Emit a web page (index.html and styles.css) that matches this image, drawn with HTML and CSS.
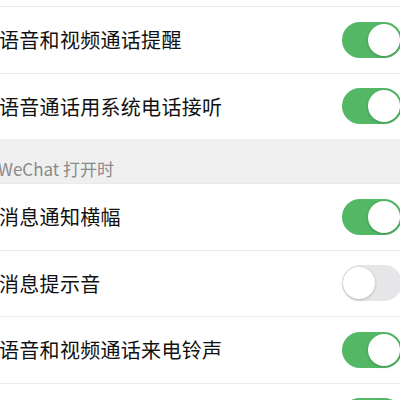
FILE: index.html
```html
<!DOCTYPE html>
<html lang="zh">
<head>
<meta charset="utf-8">
<link rel="stylesheet" href="styles.css">
</head>
<body>
<div class="page">
  <div class="top-gap"></div>
  <div class="group">
    <div class="row"><span class="label">语音和视频通话提醒</span><span class="switch on"><span class="knob"></span></span></div>
    <div class="row"><span class="label">语音通话用系统电话接听</span><span class="switch on"><span class="knob"></span></span></div>
  </div>
  <div class="section">WeChat 打开时</div>
  <div class="group">
    <div class="row"><span class="label">消息通知横幅</span><span class="switch on"><span class="knob"></span></span></div>
    <div class="row"><span class="label">消息提示音</span><span class="switch off"><span class="knob"></span></span></div>
    <div class="row"><span class="label">语音和视频通话来电铃声</span><span class="switch on"><span class="knob"></span></span></div>
    <div class="row"><span class="label">语音和视频通话震动</span><span class="switch on"><span class="knob"></span></span></div>
  </div>
</div>
</body>
</html>
```
FILE: styles.css
```css
html, body {
  margin: 0;
  padding: 0;
  background: #ffffff;
  overflow: hidden;
}
.page {
  width: 400px;
  height: 400px;
  overflow: hidden;
  font-family: "Noto Sans CJK SC", "Noto Sans", sans-serif;
}
.top-gap {
  height: 6px;
  background: #ffffff;
}
.group {
  background: #ffffff;
}
.row {
  height: 65.5px;
  border-top: 1px solid #e9e9e9;
  display: flex;
  align-items: center;
  justify-content: space-between;
  padding-left: 0;
}
.label {
  font-size: 20px;
  color: #111111;
  margin-left: -1px;
  letter-spacing: 0.3px;
}
.section {
  height: 44px;
  background: #efeff0;
  color: #8a8a8a;
  font-size: 17px;
  display: flex;
  align-items: center;
  padding-top: 14px;
  box-sizing: border-box;
  margin-left: -2px;
}
.switch {
  width: 60px;
  height: 36px;
  border-radius: 18px;
  margin-right: -2px;
  display: flex;
  align-items: center;
  padding: 0 2px;
  box-sizing: border-box;
  flex-shrink: 0;
}
.switch.on {
  background: #52b865;
  justify-content: flex-end;
}
.switch.off {
  background: #e6e6e8;
  justify-content: flex-start;
  padding-left: 1px;
}
.knob {
  width: 32px;
  height: 32px;
  border-radius: 50%;
  background: #ffffff;
  box-shadow: 0 1px 3px rgba(0, 0, 0, 0.22);
}
```
